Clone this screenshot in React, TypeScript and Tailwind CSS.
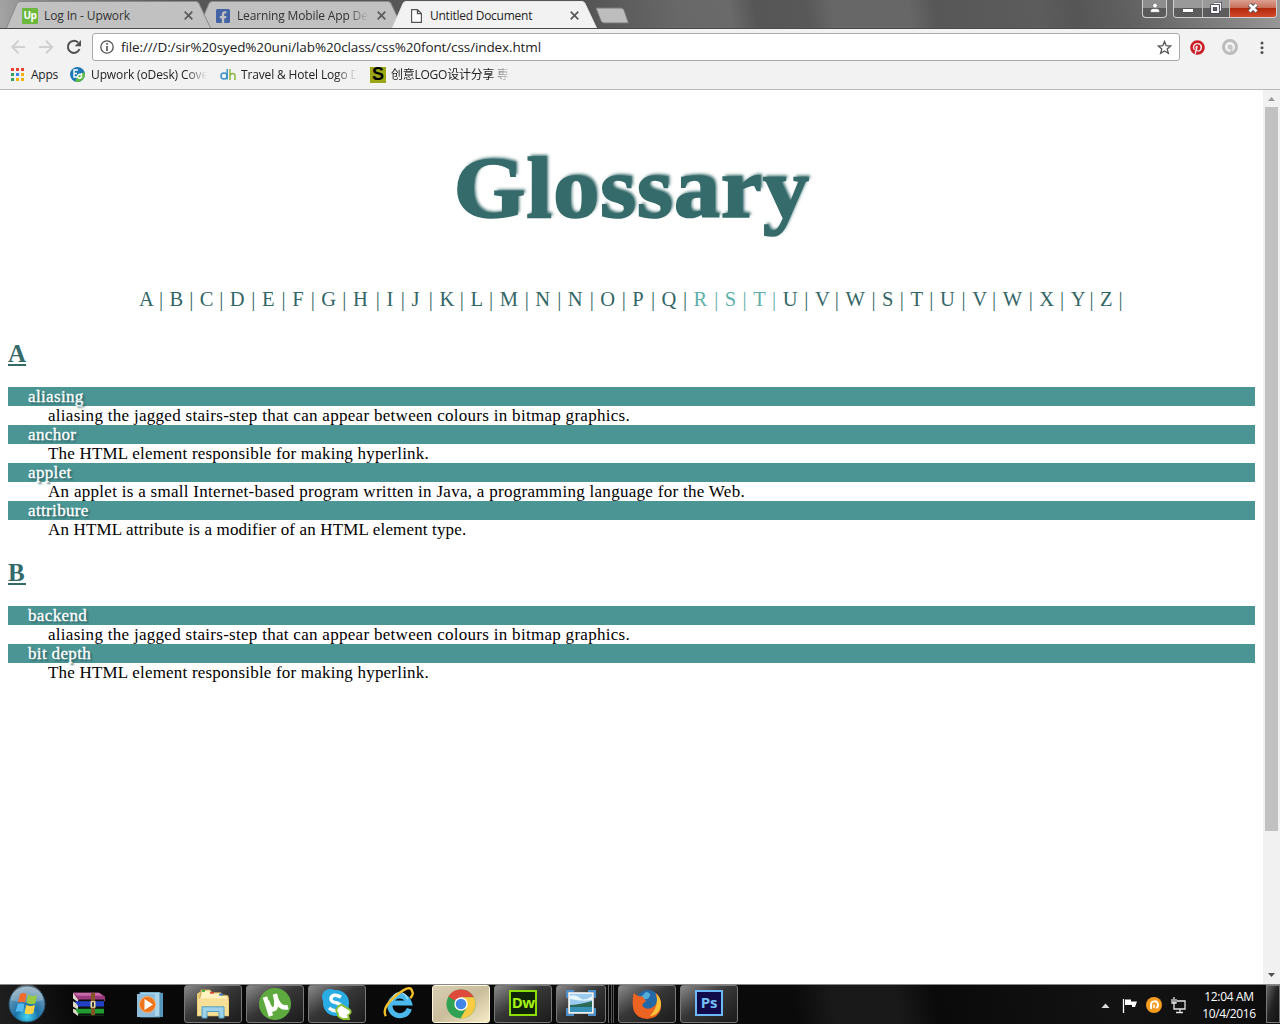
import React from "react";
import { FaPinterest, FaFacebookSquare } from "react-icons/fa";

const UI = "font-['Open_Sans','Noto_Sans_CJK_SC',sans-serif]";

const letters: [string, number][] = [
  ["A", 30.6], ["B", 30.2], ["C", 30], ["D", 32.2], ["E", 30.2], ["F", 29.1], ["G", 31.7], ["H", 33.5],
  ["I", 25], ["J", 28], ["K", 31], ["L", 29.2], ["M", 35.7], ["N", 32.5], ["N", 32.5], ["O", 32],
  ["P", 29.3], ["Q", 32], ["R", 31.2], ["S", 28.4], ["T", 29.5], ["U", 32.2], ["V", 30.5], ["W", 36.7],
  ["S", 28.4], ["T", 29.5], ["U", 32.2], ["V", 30.5], ["W", 36.7], ["X", 31.3], ["Y", 29.4], ["Z", 29.1],
];

function Tab({ active, className, children }: { active?: boolean; className: string; children: React.ReactNode }) {
  return (
    <div className={`relative flex h-[29px] shrink-0 items-center pt-[2px] text-[12px] ${className}`}>
      <svg className="absolute inset-0 h-full w-full" viewBox="0 0 205 29" preserveAspectRatio="none">
        <path
          d="M0 29 L11 3.5 Q12 1.5 14 1.5 H190 Q192 1.5 193 3.5 L205 29"
          fill={active ? "#f2f2f2" : "#c1c1c1"}
          stroke={active ? "#e9e9e9" : "#8a8a8a"}
        />
      </svg>
      {children}
    </div>
  );
}

function Cross({ className }: { className: string }) {
  return (
    <svg className={`relative h-[9px] w-[9px] shrink-0 ${className}`} viewBox="0 0 9 9">
      <path d="M.7 .7 8.3 8.3M8.3 .7 .7 8.3" stroke="#5a5a5a" strokeWidth="1.7" />
    </svg>
  );
}

function Entry({ term, tracking, children }: { term: string; tracking: string; children: string }) {
  return (
    <>
      <dt className="h-[19px] bg-[#4b9595] pl-5 tracking-[0.35px] text-white [text-shadow:2px_2px_2px_#2c5e5e] [-webkit-text-stroke:0.3px_white]">
        {term}
      </dt>
      <dd className={`h-[19px] pl-10 text-black ${tracking}`}>{children}</dd>
    </>
  );
}

function TaskButton({ className, active, children }: { className: string; active?: boolean; children: React.ReactNode }) {
  return (
    <div
      className={`flex h-[38px] shrink-0 items-center justify-center rounded-[3px] border ${
        active
          ? "border-[#fff8df] bg-linear-to-br from-[#d9cfb4] via-[#c9bd9c] to-[#f7ecc6]"
          : "border-[#777] bg-linear-to-br from-[#8a8a8a] via-[#373737] via-45% to-[#1b1b1b]"
      } ${className}`}
    >
      {children}
    </div>
  );
}

function TitleBar() {
  return (
    <div className="flex h-[29px] items-start overflow-hidden border-b border-[#4a4a4a] bg-[linear-gradient(82deg,#a5a5a5_0%,#8a8a8a_3%,#585858_14%,#555_46%,#686868_53%,#6a6a6a_57%,#565656_59%,#585858_63%,#676767_65%,#676767_71%,#575757_73%,#5c5c5c_81%,#565656_84%,#606060_88%,#888_97%,#999_100%)] pl-[6px]">
      <Tab className="z-10 w-[205px]">
        <span className="relative ml-4 flex h-4 w-4 items-center justify-center rounded-[1px] bg-[#6cb83c] pb-px text-[10px] font-bold tracking-[-0.5px] text-white">Up</span>
        <span className="relative ml-[6px] w-[128px] tracking-[-0.12px] text-[#333]">Log In - Upwork</span>
        <Cross className="ml-[12px]" />
      </Tab>
      <Tab className="-ml-[13px] w-[205px]">
        <FaFacebookSquare className="relative ml-[17px] h-4 w-4 text-[#4463a5]" />
        <span className="relative ml-[6px] w-[131px] overflow-hidden whitespace-nowrap tracking-[-0.15px] text-[#333] [mask-image:linear-gradient(90deg,black_85%,transparent)]">
          Learning Mobile App De
        </span>
        <Cross className="ml-[9px]" />
      </Tab>
      <Tab active className="z-10 -ml-[11px] w-[205px]">
        <svg className="relative ml-[19px] h-[14px] w-[11px]" viewBox="0 0 11 14">
          <path d="M.6 .6H6.4L10.4 4.6V13.4H.6ZM6.4 .6V4.6H10.4" fill="white" stroke="#555" strokeWidth="1.2" />
        </svg>
        <span className="relative ml-[8px] w-[128px] tracking-[-0.25px] text-[#222]">Untitled Document</span>
        <Cross className="ml-[12px]" />
      </Tab>
      <svg className="-ml-[2px] mt-[7px] h-[17px] w-[36px]" viewBox="0 0 36 17">
        <path d="M1 1H26Q28 1 29 3L33.500 16H9Q7 16 6 14Z" fill="#bdbdbd" stroke="#777" />
      </svg>
      <div className="ml-auto flex">
        <div className="mr-[6px] flex h-[18px] w-[25px] justify-center rounded-b-[4px] border border-t-0 border-[#d0d0d0] bg-linear-to-b from-[#8d8d8d] from-45% to-[#5a5a5a] to-50%">
          <svg className="mt-[3px] h-[10px] w-[10px]" viewBox="0 0 10 10">
            <circle cx="5" cy="2.600" r="2.300" fill="white" stroke="#444" strokeWidth=".4" />
            <path d="M.5 9.300V8Q.5 5.700 3 5.700H7Q9.500 5.700 9.500 8V9.300Z" fill="white" stroke="#444" strokeWidth=".4" />
          </svg>
        </div>
        <div className="mr-[3px] flex h-[18px] w-[104px] overflow-hidden rounded-b-[4px] border border-t-0 border-[#d0d0d0]">
          <div className="flex w-[29px] justify-center border-r border-[#bbb] bg-linear-to-b from-[#999] from-45% to-[#5c5c5c] to-50%">
            <div className="mt-2 h-[5px] w-[12px] rounded-[1px] border border-[#555] bg-white" />
          </div>
          <div className="flex w-[27px] justify-center border-r border-[#bbb] bg-linear-to-b from-[#999] from-45% to-[#5c5c5c] to-50%">
            <svg className="mt-[2px] h-[12px] w-[12px]" viewBox="0 0 12 12">
              <path d="M4 1.500H10.500V8H8" fill="none" stroke="#454555" strokeWidth="3" />
              <path d="M4 1.500H10.500V8H8" fill="none" stroke="white" strokeWidth="1.300" />
              <path d="M2 4H8V10H2Z" fill="none" stroke="#454555" strokeWidth="3.500" />
              <path d="M2 4H8V10H2Z" fill="none" stroke="white" strokeWidth="1.800" />
            </svg>
          </div>
          <div className="flex flex-1 justify-center bg-[linear-gradient(#dda091_0%,#c86f59_45%,#b2290b_50%,#d4492c_100%)]">
            <svg className="mt-[3px] h-[10px] w-[12px]" viewBox="0 0 12 10">
              <path d="M2.500 1.500 9.500 8.500M9.500 1.500 2.500 8.500" stroke="#534a55" strokeWidth="4.500" />
              <path d="M2.500 1.500 9.500 8.500M9.500 1.500 2.500 8.500" stroke="white" strokeWidth="2.700" />
            </svg>
          </div>
        </div>
      </div>
    </div>
  );
}

function Toolbar() {
  return (
    <div className="flex h-[35px] items-center bg-[#f2f2f2] pt-[1px]">
      <svg className="ml-[10px] h-4 w-[72px] shrink-0" viewBox="0 0 72 16">
        <g fill="none" strokeWidth="2">
          <path d="M15 8H2.500M8.500 1.800 2.300 8 8.500 14.200" stroke="#d0d0d0" />
          <path d="M29 8H42M36 1.800 42.200 8 36 14.200" stroke="#d0d0d0" />
          <path d="M69.500 10A6 6 0 1 1 68 3.500" stroke="#505050" />
        </g>
        <path d="M71 1V7.300H64.700Z" fill="#505050" />
      </svg>
      <div className="ml-[10px] flex h-[28px] w-[1088px] items-center rounded-[3px] border border-[#a9a9a9] bg-white">
        <svg className="ml-[7px] h-[14px] w-[14px]" viewBox="0 0 14 14">
          <circle cx="7" cy="7" r="6.200" fill="none" stroke="#505050" strokeWidth="1.300" />
          <path d="M7 3V4.700M7 6V11" stroke="#505050" strokeWidth="1.600" />
        </svg>
        <span className="ml-[7px] whitespace-nowrap text-[13.5px] tracking-[-0.11px] text-[#222]">
          file:///D:/sir%20syed%20uni/lab%20class/css%20font/css/index.html
        </span>
        <svg className="ml-auto mr-[7px] h-[15px] w-[15px]" viewBox="0 0 15 15">
          <path d="M7.500 1.500 9.200 5.700 13.700 6 10.200 8.900 11.400 13.300 7.500 10.900 3.600 13.300 4.800 8.900 1.300 6 5.800 5.700Z" fill="none" stroke="#555" strokeWidth="1.300" />
        </svg>
      </div>
      <FaPinterest className="ml-[10px] h-[15px] w-[15px] text-[#cb1f27]" />
      <svg className="ml-[17px] h-4 w-4" viewBox="0 0 16 16">
        <circle cx="8" cy="8" r="6.500" fill="none" stroke="#bdbdbd" strokeWidth="3" />
        <circle cx="8" cy="8" r="2.500" fill="#c6c6c6" />
        <path d="M9.500 8V13" stroke="#c6c6c6" strokeWidth="2" />
      </svg>
      <svg className="ml-[22px] h-[13px] w-[4px]" viewBox="0 0 4 13" fill="#505050">
        <circle cx="2" cy="2" r="1.500" /><circle cx="2" cy="6.700" r="1.500" /><circle cx="2" cy="11.400" r="1.500" />
      </svg>
    </div>
  );
}

function Bookmarks() {
  const fade = "overflow-hidden whitespace-nowrap [mask-image:linear-gradient(90deg,black_82%,transparent)]";
  const colors = ["#ea3d34", "#ea3d34", "#ea3d34", "#35a15a", "#3c82f0", "#f5b400", "#35a15a", "#f5b400", "#f5b400"];
  return (
    <div className="flex h-[26px] items-center border-b border-[#b9b9b9] bg-[#f2f2f2] pb-[4px] text-[12px] text-[#222]">
      <div className="ml-[11px] grid shrink-0 grid-cols-3 gap-[2px]">
        {colors.map((c, i) => (
          <i key={i} className="h-[3px] w-[3px]" style={{ background: c }} />
        ))}
      </div>
      <span className="ml-[7px] w-[27px] tracking-[-0.25px]">Apps</span>
      <svg className="ml-[12px] h-[15px] w-[16px]" viewBox="0 0 16 15">
        <circle cx="7.500" cy="7.500" r="7.500" fill="#1b78b4" />
        <path d="M14.500 5A7.500 7.500 0 0 1 5 14.500Q7 8 14.500 5" fill="#62bd45" />
        <path d="M8 3H4V10H7.500M4 6.500H7M11.500 6V11M11 8A2 1.800 0 1 0 11 10.500" stroke="white" strokeWidth="1.400" fill="none" />
      </svg>
      <span className={`ml-[5px] w-[116px] tracking-[-0.12px] ${fade}`}>Upwork (oDesk) Cove</span>
      <svg className="ml-[13px] h-[13px] w-4" viewBox="0 0 16 13" fill="none" strokeWidth="1.500">
        <circle cx="4" cy="8" r="3" stroke="#3a92c6" /><path d="M7.200 1V11.500" stroke="#3a92c6" />
        <path d="M10 1V12M10 8Q10.500 5.500 12.500 5.500Q15 5.500 15 8V12" stroke="#8eb83f" />
      </svg>
      <span className={`ml-[5px] w-[116px] tracking-[-0.15px] ${fade}`}>Travel &amp; Hotel Logo D</span>
      <span className="ml-[13px] flex h-4 w-4 items-center justify-center bg-[#9ba716] font-['Liberation_Sans'] text-[18px] font-black text-black">S</span>
      <span className={`ml-[5px] w-[120px] tracking-[-0.25px] ${fade}`}>创意LOGO设计分享 専</span>
    </div>
  );
}

function Taskbar() {
  return (
    <div className="flex h-[40px] items-start border-t border-[#888] bg-[linear-gradient(80deg,#202020_0%,#080808_6%,#0a0a0a_62%,#191919_65%,#191919_70%,#0a0a0a_73%,#131313_88%,#0c0c0c_100%)]">
      <svg className="ml-2 h-[38px] w-[38px] shrink-0" viewBox="0 0 38 38">
        <defs>
          <radialGradient id="orb" cx="50%" cy="85%" r="80%">
            <stop offset="0" stopColor="#43d5f5" /><stop offset=".4" stopColor="#1a72a8" /><stop offset="1" stopColor="#86a5ba" />
          </radialGradient>
        </defs>
        <circle cx="19" cy="19" r="18" fill="url(#orb)" stroke="#264e69" />
        <path d="M3 15A16 16 0 0 1 35 15Q19 20 3 15" fill="white" opacity=".22" />
        <path d="M12 9Q15 7 18.500 9L17 17.500Q14 16 10 17.500Z" fill="#f26b2b" />
        <path d="M20 9.800Q24 12 29 10L27.300 18.500Q22 20 18.500 18Z" fill="#98ca45" />
        <path d="M9.700 19Q13 17.500 16.600 19L15 27.500Q12 25.500 7.500 27Z" fill="#55baf1" />
        <path d="M18.200 19.700Q22 22 27 20L25.300 28.500Q20 30 16.600 28.200Z" fill="#ffd347" />
      </svg>
      <svg className="ml-[26px] mt-[6px] h-[26px] w-[34px] shrink-0" viewBox="0 0 34 28" preserveAspectRatio="none">
        <path d="M1 2 6 5V12L1 8Z M1 11 6 14V20L1 17Z M1 19 6 21V27L1 23Z" fill="#ddd8c8" />
        <path d="M1 2H27L33 6V11H7Z" fill="#9b397e" /><path d="M1 2H27L31 5H6Z" fill="#c96aa8" />
        <path d="M3 11H32V18H7Z" fill="#2041c4" /><path d="M3 19H32V26H7Z" fill="#229b31" />
        <path d="M7 10H32M7 17.500H32M7 25H32" stroke="#111" strokeWidth="1.500" />
        <path d="M21 2V26" stroke="#835529" strokeWidth="4" /><path d="M21 11V18" stroke="#eee1aa" strokeWidth="5" /><path d="M21 12V17" stroke="#333" strokeWidth="2" />
      </svg>
      <svg className="ml-[31px] mt-[7px] h-[26px] w-[28px] shrink-0" viewBox="0 0 28 26">
        <path d="M6 1H26V25H6Z" fill="#5698bd" /><path d="M3 0H23V25H3Z" fill="#a8d5eb" stroke="#548aaa" /><path d="M0 2H18V25H0Z" fill="#8dbddb" />
        <circle cx="10.500" cy="12.500" r="8" fill="#ee741c" stroke="#f9ad6c" /><path d="M7.500 7 16 12.500 7.500 18Z" fill="white" />
      </svg>
      <TaskButton className="ml-[19px] w-[58px]">
        <svg className="h-[30px] w-[34px]" viewBox="0 0 34 32" preserveAspectRatio="none">
          <path d="M1 29V5L4 3H13L15 6H30L33 9V29Z" fill="#e9cd77" />
          <path d="M5 5V1H14L16 4H25V7H32V12H3Z" fill="#fff2c1" stroke="#c99e4e" />
          <path d="M6 2H9" stroke="#2eaa37" strokeWidth="2" /><path d="M14 4H18" stroke="#d64b37" strokeWidth="2" /><path d="M23 6H27" stroke="#3483ce" strokeWidth="2" />
          <path d="M2 10H32V28H2Z" fill="#f5df96" />
          <path d="M6 31V19H28V31H23V24H11V31Z" fill="#9ed2eb" stroke="#4e9dc3" />
        </svg>
      </TaskButton>
      <TaskButton className="ml-[4px] w-[58px]">
        <svg className="h-[32px] w-[32px]" viewBox="0 0 32 32">
          <circle cx="16" cy="16" r="16" fill="#5eaa3f" />
          <path d="M6 9 12 28M8 13Q11 23 15 21Q19 19 16 6M16 7Q20 22 29 19" stroke="white" strokeWidth="4.500" fill="none" />
        </svg>
      </TaskButton>
      <TaskButton className="ml-[4px] w-[58px]">
        <svg className="h-[32px] w-[32px]" viewBox="0 0 32 32">
          <circle cx="9" cy="9" r="8" fill="#2aace4" /><circle cx="15" cy="15" r="13" fill="#2aace4" /><circle cx="21" cy="21" r="7" fill="#2aace4" />
          <path d="M20 9Q12 5 10 10Q9 14 16 15Q22 17 19 21Q14 25 8 20" fill="none" stroke="white" strokeWidth="3.500" />
          <path d="M17 19Q20 15 24 19L29 22Q31 25 27 27L28 31H22Q16 29 17 26L15 22Z" fill="white" stroke="#8cc334" strokeWidth="1.800" />
        </svg>
      </TaskButton>
      <svg className="ml-[17px] mt-[2px] h-[32px] w-[32px] shrink-0" viewBox="0 0 34 34">
        <path d="M28 23A10.500 10.500 0 1 1 28 17H10" fill="none" stroke="#4bb8ec" strokeWidth="5.500" />
        <path d="M10 15A8 8 0 0 1 26 13" fill="none" stroke="#a9e5fb" strokeWidth="1.500" />
        <path d="M3 31Q-2 22 14 9T31 5Q33 7 29 12" fill="none" stroke="#f4bf28" strokeWidth="2.500" />
      </svg>
      <TaskButton active className="ml-[17px] w-[58px]">
        <svg className="h-[30px] w-[30px]" viewBox="0 0 30 30">
          <circle cx="15" cy="15" r="14.500" fill="#30a254" />
          <path d="M15 15 2.400 7.700A14.500 14.500 0 0 1 27.800 8.300H15Z" fill="#de4b3c" />
          <path d="M15 8.300H27.800A14.500 14.500 0 0 1 14.500 29.500L21 18Z" fill="#f8cc42" />
          <circle cx="15" cy="15" r="6.700" fill="white" /><circle cx="15" cy="15" r="5.300" fill="#4285e8" />
        </svg>
      </TaskButton>
      <TaskButton className="ml-[4px] w-[58px]">
        <span className="mb-[3px] flex h-[26px] w-[28px] items-center justify-center border-2 border-[#8ddd08] bg-[#10240a] text-[15px] font-bold tracking-[-0.6px] text-[#a5f315]">Dw</span>
      </TaskButton>
      <TaskButton className="ml-[4px] w-[50px]">
        <svg className="mb-[2px] h-[26px] w-[30px]" viewBox="0 0 30 26">
          <path d="M1 8V1H8M22 1H29V8M29 18V25H22M8 25H1V18" stroke="#4a8fc9" strokeWidth="2" fill="none" />
          <path d="M3 3H27V23H3Z" fill="#9acbee" stroke="white" strokeWidth="1.500" />
          <path d="M4 6Q10 4 14 8T26 6V10Q17 12 4 9Z" fill="#e8f6fc" /><path d="M4 15Q12 15 26 11V17H4Z" fill="#2c6956" /><path d="M4 17H26V22H4Z" fill="#3893bb" />
        </svg>
      </TaskButton>
      <div className="flex h-[38px] w-[8px] justify-between border-r border-[#555] pl-[2px]"><i className="w-px bg-[#666]" /><i className="w-px bg-[#555]" /><i className="w-0" /></div>
      <TaskButton className="ml-[4px] w-[58px]">
        <svg className="h-[30px] w-[30px]" viewBox="0 0 32 32">
          <circle cx="17" cy="14" r="13" fill="#2469a7" /><path d="M15 3Q22 5 18 9Q15 13 9 9Z" fill="#54aeda" />
          <path d="M2 4Q5 8 11 8L15 13 11 16Q11 21 18 21Q25 20 27 12L25 4Q31 8 31 18A15 14 0 0 1 1 18Q0 12 2 4Z" fill="#ed6322" />
          <path d="M26 5Q33 12 30 21Q27 28 19 29Q29 19 26 5" fill="#f9c337" />
        </svg>
      </TaskButton>
      <TaskButton className="ml-[4px] w-[58px]">
        <span className="mb-[3px] flex h-[26px] w-[28px] items-center justify-center border-2 border-[#6db9f5] bg-[#110b4c] text-[15px] font-bold tracking-[-0.2px] text-[#75bff6]">Ps</span>
      </TaskButton>
      <svg className="ml-auto mr-[16px] mt-[11px] h-[18px] w-[86px] shrink-0" viewBox="0 0 86 18">
        <path d="M1.500 12 5.500 7.500 9.500 12Z" fill="#ddd" />
        <path d="M23.500 3V17" stroke="white" strokeWidth="1.300" /><path d="M25 3.500H31V5.500H37L35 11H32V9H25Z" fill="white" />
        <circle cx="54" cy="9" r="8" fill="#f59b20" />
        <path d="M51 13V9A3.500 3.500 0 1 1 56 12" stroke="white" strokeWidth="1.900" fill="none" /><path d="M54 8.500V12" stroke="white" strokeWidth="1.500" />
        <path d="M77 5H85V13H74V9M76 16.500H83M80 13V16M72 3V7H76V3M74 1V9" stroke="#e5e5e5" strokeWidth="1.300" fill="none" />
      </svg>
      <div className="mr-[10px] mt-[3px] w-[54px] shrink-0 whitespace-nowrap text-center text-[12px] leading-[17px] tracking-[-0.35px] text-white">
        12:04 AM<br />10/4/2016
      </div>
      <div className="h-[38px] w-[14px] shrink-0 border border-[#777] bg-linear-to-br from-[#666] via-[#222] to-[#111]" />
    </div>
  );
}

export default function App() {
  return (
    <div className={`flex h-[1024px] w-[1280px] flex-col overflow-hidden bg-white ${UI}`}>
      <TitleBar />
      <Toolbar />
      <Bookmarks />
      <div className="flex h-[894px]">
        <main className="w-[1263px] px-2 font-['Liberation_Serif',serif] text-[17px] leading-[19px]">
          <h1 className="mt-[48px] h-[100px] text-center text-[86px] font-bold leading-[100px] tracking-[0.8px] text-[#366b6b] [text-shadow:2px_-2px_3px_#366b6b] [-webkit-text-stroke:1.6px_#366b6b]">
            <span className="inline-block scale-x-[1.075]">Glossary</span>
          </h1>
          <nav className="mt-[48px] flex h-[26px] pl-[131px] text-[20.5px] leading-[26px]">
            {letters.map(([l, w], i) => (
              <span key={i} className={`flex shrink-0 justify-between pr-[6.5px] ${i > 17 && i < 21 ? "text-[#5fb0ac]" : "text-[#336666]"}`} style={{ width: w }}>
                <span>{l}</span><span>|</span>
              </span>
            ))}
          </nav>
          <h2 className="mt-[28px] h-[28px] text-[25px] font-bold leading-[28px] text-[#336b6b] underline decoration-2 underline-offset-[2px]">A</h2>
          <dl className="mt-[19px]">
            <Entry term="aliasing" tracking="tracking-[0.29px]">aliasing the jagged stairs-step that can appear between colours in bitmap graphics.</Entry>
            <Entry term="anchor" tracking="tracking-[0.2px]">The HTML element responsible for making hyperlink.</Entry>
            <Entry term="applet" tracking="tracking-[0.29px]">An applet is a small Internet-based program written in Java, a programming language for the Web.</Entry>
            <Entry term="attribure" tracking="tracking-[0.15px]">An HTML attribute is a modifier of an HTML element type.</Entry>
          </dl>
          <h2 className="mt-[20px] h-[28px] text-[25px] font-bold leading-[28px] text-[#336b6b] underline decoration-2 underline-offset-[2px]">
            <span className="tracking-[1.3px]">B</span>
          </h2>
          <dl className="mt-[19px]">
            <Entry term="backend" tracking="tracking-[0.29px]">aliasing the jagged stairs-step that can appear between colours in bitmap graphics.</Entry>
            <Entry term="bit depth" tracking="tracking-[0.2px]">The HTML element responsible for making hyperlink.</Entry>
          </dl>
        </main>
        <div className="flex w-[17px] flex-col items-center bg-[#f1f1f1]">
          <svg className="h-[17px] w-[17px]" viewBox="0 0 17 17"><path d="M5 11 8.500 7 12 11Z" fill="#999" /></svg>
          <div className="h-[724px] w-[13px] bg-[#c1c1c1]" />
          <svg className="mt-auto h-[17px] w-[17px]" viewBox="0 0 17 17"><path d="M5 6 8.500 10 12 6Z" fill="#505050" /></svg>
        </div>
      </div>
      <Taskbar />
    </div>
  );
}
